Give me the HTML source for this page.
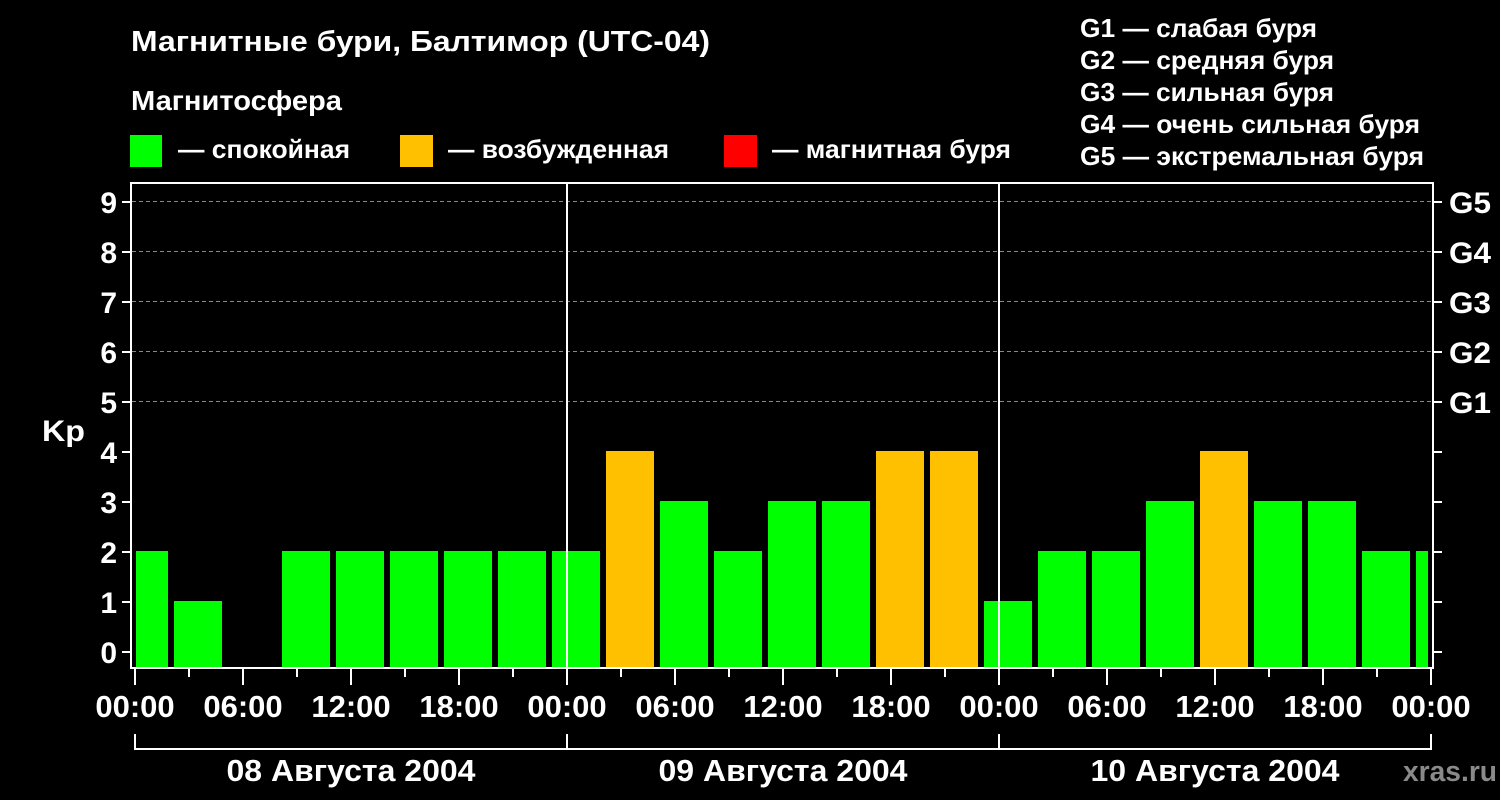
<!DOCTYPE html>
<html><head><meta charset="utf-8"><style>
html,body{margin:0;padding:0;background:#000;}
svg{display:block;}
text{font-family:"Liberation Sans",Arial,sans-serif;font-weight:bold;fill:#fff;}
</style></head><body>
<svg width="1500" height="800" viewBox="0 0 1500 800" xmlns="http://www.w3.org/2000/svg">
<rect width="1500" height="800" fill="#000"/>
<text x="131" y="51" font-size="29" textLength="579" lengthAdjust="spacingAndGlyphs">Магнитные бури, Балтимор (UTC-04)</text>
<text x="131" y="110" font-size="28" textLength="211" lengthAdjust="spacingAndGlyphs">Магнитосфера</text>
<rect x="130" y="135" width="32" height="32" fill="#00ff00"/>
<text x="178" y="158" font-size="26" textLength="172" lengthAdjust="spacingAndGlyphs">— спокойная</text>
<rect x="400" y="135" width="33" height="32" fill="#ffc000"/>
<text x="448" y="158" font-size="26" textLength="221" lengthAdjust="spacingAndGlyphs">— возбужденная</text>
<rect x="724" y="135" width="33" height="32" fill="#ff0000"/>
<text x="772" y="158" font-size="26" textLength="239" lengthAdjust="spacingAndGlyphs">— магнитная буря</text>
<g font-size="26">
<text x="1080" y="37" textLength="237" lengthAdjust="spacingAndGlyphs">G1 — слабая буря</text>
<text x="1080" y="69" textLength="254" lengthAdjust="spacingAndGlyphs">G2 — средняя буря</text>
<text x="1080" y="101" textLength="254" lengthAdjust="spacingAndGlyphs">G3 — сильная буря</text>
<text x="1080" y="133" textLength="340" lengthAdjust="spacingAndGlyphs">G4 — очень сильная буря</text>
<text x="1080" y="165" textLength="344" lengthAdjust="spacingAndGlyphs">G5 — экстремальная буря</text>
</g>
<g stroke="#888" stroke-width="1" stroke-dasharray="4,3">
<line x1="132" y1="201.5" x2="1432" y2="201.5"/>
<line x1="132" y1="251.5" x2="1432" y2="251.5"/>
<line x1="132" y1="301.5" x2="1432" y2="301.5"/>
<line x1="132" y1="351.5" x2="1432" y2="351.5"/>
<line x1="132" y1="401.5" x2="1432" y2="401.5"/>
</g>
<g fill="#00ff00">
<rect x="136" y="551" width="32" height="117"/>
<rect x="174" y="601" width="48" height="67"/>
<rect x="282" y="551" width="48" height="117"/>
<rect x="336" y="551" width="48" height="117"/>
<rect x="390" y="551" width="48" height="117"/>
<rect x="444" y="551" width="48" height="117"/>
<rect x="498" y="551" width="48" height="117"/>
<rect x="552" y="551" width="48" height="117"/>
<rect x="660" y="501" width="48" height="167"/>
<rect x="714" y="551" width="48" height="117"/>
<rect x="768" y="501" width="48" height="167"/>
<rect x="822" y="501" width="48" height="167"/>
<rect x="984" y="601" width="48" height="67"/>
<rect x="1038" y="551" width="48" height="117"/>
<rect x="1092" y="551" width="48" height="117"/>
<rect x="1146" y="501" width="48" height="167"/>
<rect x="1254" y="501" width="48" height="167"/>
<rect x="1308" y="501" width="48" height="167"/>
<rect x="1362" y="551" width="48" height="117"/>
<rect x="1416" y="551" width="12" height="117"/>
</g>
<g fill="#ffc000">
<rect x="606" y="451" width="48" height="217"/>
<rect x="876" y="451" width="48" height="217"/>
<rect x="930" y="451" width="48" height="217"/>
<rect x="1200" y="451" width="48" height="217"/>
</g>
<g stroke="#fff" stroke-width="2" fill="none">
<path d="M131 183 H1433 V668 H131 Z"/>
<line x1="567" y1="183" x2="567" y2="668"/>
<line x1="999" y1="183" x2="999" y2="668"/>
<path d="M122 652H131M122 602H131M122 552H131M122 502H131M122 452H131M122 402H131M122 352H131M122 302H131M122 252H131M122 202H131"/>
<path d="M1433 652H1442M1433 602H1442M1433 552H1442M1433 502H1442M1433 452H1442M1433 402H1442M1433 352H1442M1433 302H1442M1433 252H1442M1433 202H1442"/>
<path d="M135 669V685M243 669V685M351 669V685M459 669V685M567 669V685M675 669V685M783 669V685M891 669V685M999 669V685M1107 669V685M1215 669V685M1323 669V685M1431 669V685"/>
<path d="M189 669V677M297 669V677M405 669V677M513 669V677M621 669V677M729 669V677M837 669V677M945 669V677M1053 669V677M1161 669V677M1269 669V677M1377 669V677"/>
<path d="M135 734V749H1431V734M567 734V749M999 734V749"/>
</g>
<g font-size="30" text-anchor="end">
<text x="117" y="663">0</text><text x="117" y="613">1</text><text x="117" y="563">2</text>
<text x="117" y="513">3</text><text x="117" y="463">4</text><text x="117" y="413">5</text>
<text x="117" y="363">6</text><text x="117" y="313">7</text><text x="117" y="263">8</text>
<text x="117" y="213">9</text>
</g>
<text x="42" y="441" font-size="30" textLength="43" lengthAdjust="spacingAndGlyphs">Kp</text>
<g font-size="30">
<text x="1449" y="213" textLength="42" lengthAdjust="spacingAndGlyphs">G5</text><text x="1449" y="263" textLength="42" lengthAdjust="spacingAndGlyphs">G4</text><text x="1449" y="313" textLength="42" lengthAdjust="spacingAndGlyphs">G3</text>
<text x="1449" y="363" textLength="42" lengthAdjust="spacingAndGlyphs">G2</text><text x="1449" y="413" textLength="42" lengthAdjust="spacingAndGlyphs">G1</text>
</g>
<g font-size="31" text-anchor="middle">
<text x="135" y="717">00:00</text><text x="243" y="717">06:00</text><text x="351" y="717">12:00</text>
<text x="459" y="717">18:00</text><text x="567" y="717">00:00</text><text x="675" y="717">06:00</text>
<text x="783" y="717">12:00</text><text x="891" y="717">18:00</text><text x="999" y="717">00:00</text>
<text x="1107" y="717">06:00</text><text x="1215" y="717">12:00</text><text x="1323" y="717">18:00</text>
<text x="1431" y="717">00:00</text>
</g>
<g font-size="31" text-anchor="middle">
<text x="351" y="781" textLength="249" lengthAdjust="spacingAndGlyphs">08 Августа 2004</text>
<text x="783" y="781" textLength="249" lengthAdjust="spacingAndGlyphs">09 Августа 2004</text>
<text x="1215" y="781" textLength="249" lengthAdjust="spacingAndGlyphs">10 Августа 2004</text>
</g>
<text x="1403" y="781" font-size="29" textLength="94" lengthAdjust="spacingAndGlyphs" style="fill:#8a8a8a">xras.ru</text>
</svg>
</body></html>
